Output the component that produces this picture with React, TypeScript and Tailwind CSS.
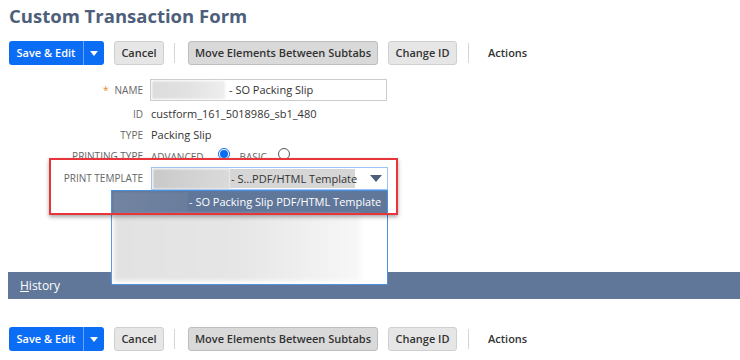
import React from "react";

function ButtonRow() {
  return (
    <div className="flex items-center h-[24px] ml-[9px]">
      <div className="flex h-[24px] w-[95px] rounded-[3px] bg-[#0b6cf4] text-white">
        <div className="w-[74px] flex items-center justify-center text-[11px] font-semibold">Save &amp; Edit</div>
        <div className="w-[1px] bg-[#6aa6f8]" />
        <div className="flex-1 flex items-center justify-center">
          <svg width="8" height="5" viewBox="0 0 8 5"><path d="M0 0h8L4 5z" fill="#fff" /></svg>
        </div>
      </div>
      <div className="ml-[10px] w-[50px] h-[24px] rounded-[3px] bg-[#e6e6e6] border border-[#cfcfcf] flex items-center justify-center text-[11px] font-semibold text-[#333]">Cancel</div>
      <div className="ml-[10px] w-[1px] h-[20px] bg-[#d6d6d6]" />
      <div className="ml-[13px] w-[190px] h-[24px] rounded-[3px] bg-[#d9d9d9] border border-[#bdbdbd] flex items-center justify-center text-[11px] font-semibold text-[#333] whitespace-nowrap">Move Elements Between Subtabs</div>
      <div className="ml-[10px] w-[69px] h-[24px] rounded-[3px] bg-[#e6e6e6] border border-[#cfcfcf] flex items-center justify-center text-[11px] font-semibold text-[#333]">Change ID</div>
      <div className="ml-[11px] w-[1px] h-[20px] bg-[#d6d6d6]" />
      <div className="ml-[19px] text-[11px] font-semibold text-[#333]">Actions</div>
    </div>
  );
}

function Label({ children }: { children: React.ReactNode }) {
  return <div className="w-[143px] text-right text-[10px] uppercase text-[#666]">{children}</div>;
}

export default function App() {
  return (
    <div className="relative w-[740px] h-[360px] overflow-hidden bg-white" style={{ fontFamily: '"Open Sans", "Liberation Sans", sans-serif' }}>
      <div className="pl-[9px] pt-[2px] h-[30px] text-[18.5px] leading-[28px] font-bold text-[#4d5f7a]">Custom Transaction Form</div>
      <div className="mt-[11px]">
        <ButtonRow />
      </div>

      <div className="mt-[14px] flex flex-col">
        <div className="flex items-center h-[22px]">
          <Label><span className="text-[#e8892c] mr-[6px]">*</span>Name</Label>
          <div className="ml-[7px] w-[237px] h-[22px] border border-[#cccccc] flex items-center">
            <div className="shrink-0 ml-[1px] w-[73px] h-[18px] bg-gradient-to-r from-[#dcdcdc] via-[#e2e2e2] to-[#eeeeee] blur-[1px]" />
            <span className="ml-[4px] text-[11px] text-[#333]">- SO Packing Slip</span>
          </div>
        </div>
        <div className="flex items-center h-[22px] mt-[2px]">
          <Label>ID</Label>
          <div className="ml-[8px] text-[11px] text-[#333]">custform_161_5018986_sb1_480</div>
        </div>
        <div className="flex items-center h-[21px]">
          <Label>Type</Label>
          <div className="ml-[8px] text-[11px] text-[#333]">Packing Slip</div>
        </div>
        <div className="flex items-center h-[21px]">
          <Label>Printing Type</Label>
          <div className="ml-[8px] flex items-center">
            <span className="text-[10px] text-[#666] pt-[2px]">ADVANCED</span>
            <div className="ml-[14px] mb-[5px] w-[12px] h-[12px] rounded-full border border-[#0b6cf4] bg-white flex items-center justify-center">
              <div className="w-[8px] h-[8px] rounded-full bg-[#0b6cf4]" />
            </div>
            <span className="ml-[10px] text-[10px] text-[#666] pt-[2px]">BASIC</span>
            <div className="ml-[11px] mb-[5px] w-[12px] h-[12px] rounded-full border border-[#555] bg-white" />
          </div>
        </div>
        <div className="relative z-20 flex items-center h-[23px]">
          <div className="w-[143px] text-right text-[10px] uppercase text-[#666]">Print Template</div>
          <div className="relative ml-[8px] w-[237px] h-[23px]">
            <div className="w-full h-full border border-[#9cc3f5] bg-white flex items-center">
              <div className="shrink-0 ml-[1px] w-[77px] h-[20px] bg-gradient-to-r from-[#c9c9c9] via-[#d2d2d2] to-[#dadada] blur-[1px]" />
              <span className="bg-[#d6d6d6] text-[11px] text-[#333] leading-[19px] pl-[1px] w-[125px] whitespace-nowrap">- S...PDF/HTML Template</span>
              <svg className="ml-[15px]" width="12" height="7" viewBox="0 0 12 7"><path d="M0 0h12L6 7z" fill="#4d5f7a" /></svg>
            </div>
            <div className="absolute left-[-40px] top-[23px] w-[277px] h-[95px] border border-[#4a90e2] bg-white">
              <div className="h-[22px] bg-[#607799] flex items-center">
                <div className="shrink-0 ml-[1px] w-[75px] h-[20px] bg-gradient-to-r from-[#7284a1] to-[#6a7d9c] blur-[1px]" />
                <span className="ml-[1px] text-[11px] text-white whitespace-nowrap">- SO Packing Slip PDF/HTML Template</span>
              </div>
              <div className="ml-[2px] mt-[2px] w-[246px] h-[66px] bg-gradient-to-r from-[#e2e2e2] via-[#e6e6e6] to-[#f7f7f7] blur-[2px]" />
            </div>
          </div>
        </div>
      </div>

      <div className="mt-[82px] ml-[8px] h-[27px] bg-[#607799] flex items-center pl-[12px] text-[12px] text-white">
        <span><span className="underline">H</span>istory</span>
      </div>

      <div className="mt-[28px]">
        <ButtonRow />
      </div>

      <div className="absolute z-10 left-[49px] top-[158px] w-[349px] h-[57px] bg-white" />
      <div className="absolute z-30 left-[49px] top-[158px] w-[349px] h-[57px] border-2 border-[#e8353a] shadow-[0_2px_4px_rgba(0,0,0,0.35)] pointer-events-none" />
    </div>
  );
}
